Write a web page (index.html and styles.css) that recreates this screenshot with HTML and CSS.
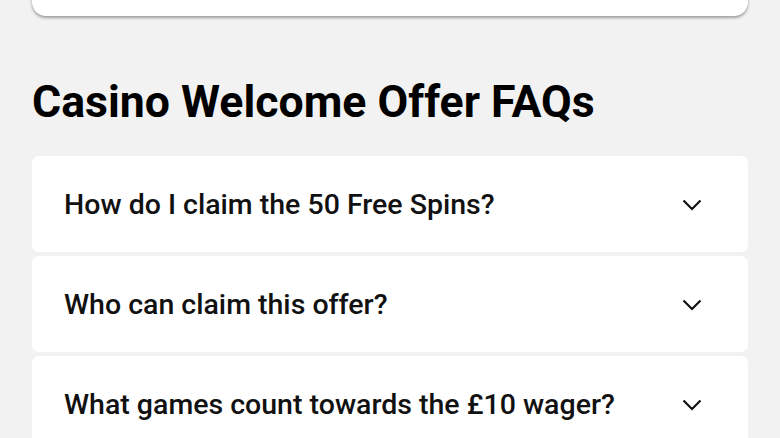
FILE: index.html
```html
<!DOCTYPE html>
<html lang="en">
<head>
<meta charset="utf-8">
<link rel="stylesheet" href="styles.css">
</head>
<body>
<div class="page">
  <div class="top-card"></div>
  <section class="faq">
    <h2 class="faq-title">Casino Welcome Offer FAQs</h2>
    <div class="faq-list">
      <div class="faq-item">
        <span class="faq-q">How do I claim the 50 Free Spins?</span>
        <svg class="chev" width="20" height="12" viewBox="0 0 20 12"><path d="M1.5 1.5 L10 10 L18.5 1.5" fill="none" stroke="#111" stroke-width="2.2"/></svg>
      </div>
      <div class="faq-item">
        <span class="faq-q">Who can claim this offer?</span>
        <svg class="chev" width="20" height="12" viewBox="0 0 20 12"><path d="M1.5 1.5 L10 10 L18.5 1.5" fill="none" stroke="#111" stroke-width="2.2"/></svg>
      </div>
      <div class="faq-item">
        <span class="faq-q">What games count towards the £10 wager?</span>
        <svg class="chev" width="20" height="12" viewBox="0 0 20 12"><path d="M1.5 1.5 L10 10 L18.5 1.5" fill="none" stroke="#111" stroke-width="2.2"/></svg>
      </div>
    </div>
  </section>
</div>
</body>
</html>
```

FILE: styles.css
```css
html, body {
  margin: 0;
  padding: 0;
  background: #f2f2f2;
  font-family: Roboto, "Liberation Sans", sans-serif;
  color: #000;
  overflow: hidden;
}
.page {
  width: 716px;
  margin: 0 auto;
  padding: 0 32px;
}
.top-card {
  height: 46px;
  margin-top: -30px;
  background: #fff;
  border-radius: 14px;
  box-shadow: 0 2px 3px rgba(0,0,0,0.35);
}
.faq {
  padding-top: 62px;
}
.faq-title {
  margin: 0 0 30px;
  font-size: 44.6px;
  font-weight: 700;
  line-height: 48px;
}
.faq-list {
  display: flex;
  flex-direction: column;
  gap: 4px;
}
.faq-item {
  height: 96px;
  background: #fff;
  border-radius: 7px;
  display: flex;
  align-items: center;
  justify-content: space-between;
  padding: 0 46px 0 32px;
}
.faq-q {
  font-size: 28.5px;
  font-weight: 500;
  color: #111;
}
.chev {
  display: block;
  margin-top: 1px;
}
```
